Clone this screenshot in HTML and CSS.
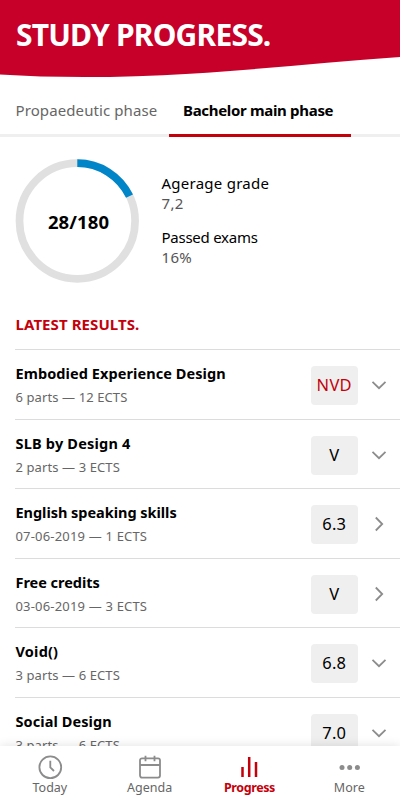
FILE: index.html
```html
<!DOCTYPE html>
<html lang="en">
<head>
<meta charset="utf-8">
<title>Study progress</title>
<link rel="stylesheet" href="styles.css">
</head>
<body>
<div class="app">
  <header class="header">
    <svg class="wave" viewBox="0 0 400 80" width="400" height="80"><path fill="#c60029" d="M0 0H400V57C330 62 265 69 190 73.700C120 78 55 78 0 74.500Z"/></svg>
    <h1 class="title">STUDY PROGRESS.</h1>
  </header>
  <nav class="tabs">
    <a class="tab t1"><span>Propaedeutic phase</span></a>
    <a class="tab t2 active"><span>Bachelor main phase</span></a>
  </nav>
  <section class="summary">
    <div class="ring">
      <svg width="124" height="124" viewBox="0 0 124 124" fill="none" stroke-width="7.700">
        <circle cx="62.300" cy="62" r="57.800" stroke="#e0e0e0"/>
        <path d="M62.300 4.200A57.800 57.800 0 0 1 114.500 37.200" stroke="#0085c8"/>
      </svg>
      <strong class="credits">28/180</strong>
    </div>
    <dl class="stats">
      <dt class="s1">Agerage grade</dt><dd>7,2</dd>
      <dt class="s2">Passed exams</dt><dd>16%</dd>
    </dl>
  </section>
  <h2 class="heading">LATEST RESULTS.</h2>
  <ul class="results">
    <li class="row"><div class="info"><h3 class="r1">Embodied Experience Design</h3><p>6 parts — 12 ECTS</p></div><span class="grade fail">NVD</span><svg class="chev" viewBox="0 0 16 16"><path d="M1.500 4.800L8 11.200L14.500 4.800"/></svg></li>
    <li class="row"><div class="info"><h3 class="r2">SLB by Design 4</h3><p>2 parts — 3 ECTS</p></div><span class="grade">V</span><svg class="chev" viewBox="0 0 16 16"><path d="M1.500 4.800L8 11.200L14.500 4.800"/></svg></li>
    <li class="row"><div class="info"><h3 class="r3">English speaking skills</h3><p class="date">07-06-2019 — 1 ECTS</p></div><span class="grade">6.3</span><svg class="chev" viewBox="0 0 16 16"><path d="M4.800 1.500L11.200 8L4.800 14.500"/></svg></li>
    <li class="row"><div class="info"><h3 class="r4">Free credits</h3><p class="date">03-06-2019 — 3 ECTS</p></div><span class="grade">V</span><svg class="chev" viewBox="0 0 16 16"><path d="M4.800 1.500L11.200 8L4.800 14.500"/></svg></li>
    <li class="row"><div class="info"><h3 class="r5">Void()</h3><p>3 parts — 6 ECTS</p></div><span class="grade">6.8</span><svg class="chev" viewBox="0 0 16 16"><path d="M1.500 4.800L8 11.200L14.500 4.800"/></svg></li>
    <li class="row"><div class="info"><h3 class="r6">Social Design</h3><p>3 parts — 6 ECTS</p></div><span class="grade">7.0</span><svg class="chev" viewBox="0 0 16 16"><path d="M1.500 4.800L8 11.200L14.500 4.800"/></svg></li>
  </ul>
  <nav class="bottom">
    <a class="item"><svg viewBox="0 0 26 26"><circle cx="13.300" cy="13.300" r="10.900"/><path d="M13.300 6.800V13.300L17 17"/></svg><span class="b1">Today</span></a>
    <a class="item"><svg viewBox="0 0 26 26"><rect x="3" y="4.300" width="20" height="19.300" rx="2"/><path d="M3 11H23M8.500 1.700V7.300M17.500 1.700V7.300"/></svg><span class="b2">Agenda</span></a>
    <a class="item current"><svg viewBox="0 0 26 26"><path d="M6.500 13V23M13.200 3V23M20 8V23"/></svg><span class="b3">Progress</span></a>
    <a class="item"><svg class="dots" viewBox="0 0 26 26"><circle cx="6" cy="13.600" r="2.500"/><circle cx="13.700" cy="13.600" r="2.500"/><circle cx="21.400" cy="13.600" r="2.500"/></svg><span class="b4">More</span></a>
  </nav>
</div>
</body>
</html>
```
FILE: styles.css
```css
* { box-sizing: border-box; margin: 0; padding: 0; }
body { background: #fff; color: #000; font-family: "Noto Sans", sans-serif; }
.app { position: relative; width: 400px; height: 800px; overflow: hidden; background: #fff; white-space: nowrap; }
.header { position: relative; height: 84px; padding: 20px 16px 0; }
.wave { position: absolute; left: 0; top: 0; }
.title { position: relative; color: #fff; font-size: 30px; line-height: 30px; letter-spacing: -0.800px; font-weight: 700; }
.tabs { display: flex; height: 53px; padding-left: 15px; border-bottom: 3px solid #efefef; }
.tab { height: 53px; padding-top: 16px; font-size: 15px; line-height: 20px; color: #666; }
.t1 { width: 154px; padding-left: 0.500px; letter-spacing: 0.100px; }
.t2 { width: 182px; padding-left: 14px; letter-spacing: -0.320px; }
.tab.active { color: #000; font-weight: 700; border-bottom: 3px solid #c4000b; }
.summary { display: flex; height: 177px; padding: 22px 0 0 15px; }
.ring { display: grid; width: 124px; height: 124px; place-items: center; }
.ring > * { grid-area: 1 / 1; }
.credits { padding: 0 0 0 3px; font-size: 18.500px; font-weight: 700; letter-spacing: 0.100px; }
.stats { padding: 15px 0 0 22.500px; font-size: 15px; line-height: 19.500px; }
.stats dd { color: #555; margin-bottom: 15px; letter-spacing: 0.300px; }
.s1 { letter-spacing: 0.250px; }
.s2 { letter-spacing: -0.250px; }
.heading { height: 35px; padding-left: 15.500px; font-size: 15px; line-height: 20px; color: #c4000b; font-weight: 700; letter-spacing: 0.080px; }
.results { list-style: none; margin-left: 15px; }
.row { display: flex; align-items: flex-start; height: 69.600px; border-top: 1px solid #dcdcdc; }
.info { width: 296px; padding: 13px 0 0 0.500px; }
.info h3 { font-size: 14.500px; line-height: 20px; font-weight: 700; letter-spacing: 0.080px; }
.info h3.r2, .info h3.r5 { letter-spacing: 0.200px; }
.info h3.r3, .info h3.r4 { letter-spacing: -0.030px; }
.info p { margin-top: 5px; font-size: 13px; line-height: 18px; color: #666; letter-spacing: 0.100px; }
.info p.date { letter-spacing: 0.180px; }
.grade { width: 46.500px; height: 39px; margin-top: 16px; border-radius: 4px; background: #efefef; font-size: 16.500px; line-height: 38px; text-align: center; letter-spacing: 0.300px; }
.fail { color: #c4000b; }
.chev { width: 16px; height: 16px; margin: 27px 0 0 13px; fill: none; stroke: #8c8c8c; stroke-width: 1.800; }
.bottom { position: absolute; left: 0; right: 0; bottom: 0; height: 54px; display: flex; background: #fff; box-shadow: 0 0 10px rgba(0, 0, 0, .12); }
.item { width: 99.800px; padding-top: 8px; display: flex; flex-direction: column; align-items: center; font-size: 12.500px; line-height: 16px; color: #666; }
.item svg { width: 26px; height: 26px; fill: none; stroke: #8c8c8c; stroke-width: 1.800; }
.item svg.dots { fill: #8c8c8c; stroke: none; }
.item.current { color: #c4000b; font-weight: 700; letter-spacing: -0.400px; }
.item.current svg { stroke: #c4000b; stroke-width: 2.500; }
```
